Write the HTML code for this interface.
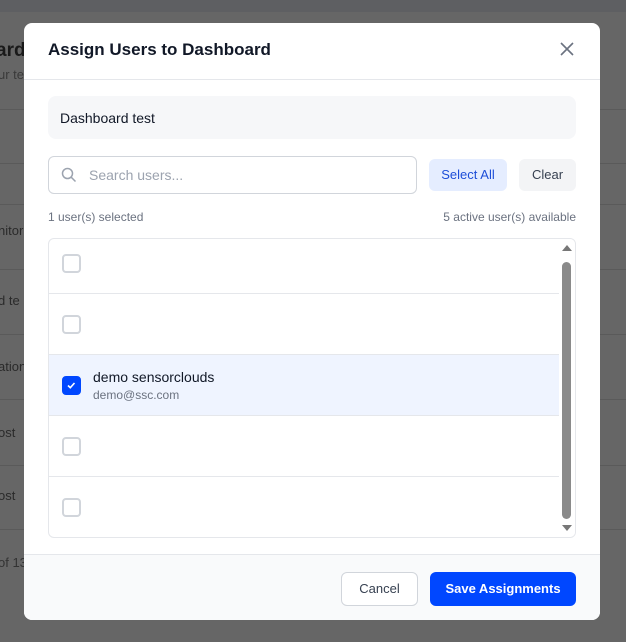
<!DOCTYPE html>
<html><head><style>
*{box-sizing:border-box;margin:0;padding:0}
body{width:626px;height:642px;overflow:hidden;font-family:"Liberation Sans",sans-serif;background:#666;position:relative}
.bgtop{position:absolute;left:0;top:0;width:626px;height:12px;background:#5e5f62}
.ln{position:absolute;left:0;width:626px;height:1px;background:#5a5a5a}
.bt{position:absolute;color:#2a2a2a;font-size:13px}
.modal{position:absolute;left:24px;top:23px;width:576px;height:597px;background:#fff;border-radius:8px;overflow:hidden}
.hd{height:57px;border-bottom:1px solid #e5e7eb;position:relative}
.hd h1{position:absolute;left:24px;top:17px;font-size:17px;font-weight:bold;color:#111827}
.x{position:absolute;right:26px;top:19px}
.name{position:absolute;left:24px;top:73px;width:528px;height:43px;background:#f6f7f9;border-radius:8px;font-size:14px;color:#111827;padding:14px 12px}
.search{position:absolute;left:24px;top:133px;width:369px;height:38px;border:1px solid #d1d5db;border-radius:6px}
.search span{position:absolute;left:40px;top:10px;color:#9ca3af;font-size:14px}
.search svg{position:absolute;left:12px;top:10px}
.sa{position:absolute;left:405px;top:136px;width:78px;height:32px;background:#e5edff;border-radius:6px;color:#1d4ed8;font-size:13px;text-align:center;line-height:32px}
.cl{position:absolute;left:495px;top:136px;width:57px;height:32px;background:#f3f4f6;border-radius:6px;color:#374151;font-size:13px;text-align:center;line-height:32px}
.meta{position:absolute;top:187px;font-size:12px;color:#6b7280}
.list{position:absolute;left:24px;top:215px;width:528px;height:300px;border:1px solid #e5e7eb;border-radius:6px;overflow:hidden}
.row{position:absolute;left:0;width:511px;border-bottom:1px solid #e5e7eb}
.cb{position:absolute;left:13px;width:19px;height:19px;border:2px solid #d1d5db;border-radius:4px;background:#fff}
.sb{position:absolute;right:0;top:0;width:16px;height:298px;background:#fff}
.thumb{position:absolute;left:3px;top:23px;width:9px;height:257px;background:#8a8a8a;border-radius:5px}
.ft{position:absolute;left:0;top:531px;width:576px;height:66px;background:#f9fafb;border-top:1px solid #e5e7eb}
.cancel{position:absolute;left:317px;top:17px;width:77px;height:34px;border:1px solid #d1d5db;border-radius:6px;background:#fff;text-align:center;line-height:32px;font-size:13px;color:#374151}
.save{position:absolute;left:406px;top:17px;width:146px;height:34px;border-radius:6px;background:#0047ff;color:#fff;text-align:center;line-height:34px;font-size:13px;font-weight:bold}
</style></head><body>
<div class="bgtop"></div>
<div class="ln" style="top:109px"></div><div class="ln" style="top:163px"></div><div class="ln" style="top:204px"></div><div class="ln" style="top:269px"></div><div class="ln" style="top:334px"></div><div class="ln" style="top:399px"></div><div class="ln" style="top:465px"></div><div class="ln" style="top:529px"></div>
<div class="bt" style="left:-4px;top:40px;font-size:19px;font-weight:bold;color:#1a1a1a">ard</div>
<div class="bt" style="left:-2px;top:67px;color:#3a3a3a">ur te</div>
<div class="bt" style="left:-2px;top:223px">nitor</div>
<div class="bt" style="left:-2px;top:293px">d te</div>
<div class="bt" style="left:-2px;top:359px">ation</div>
<div class="bt" style="left:-2px;top:425px">ost</div>
<div class="bt" style="left:-2px;top:488px">ost</div>
<div class="bt" style="left:-2px;top:555px;color:#333">of 13</div>
<div class="modal">
 <div class="hd"><h1>Assign Users to Dashboard</h1>
 <svg class="x" width="14" height="14" viewBox="0 0 14 14"><path d="M1 1L13 13M13 1L1 13" stroke="#6b7280" stroke-width="1.6"/></svg></div>
 <div class="name">Dashboard test</div>
 <div class="search"><svg width="16" height="16" viewBox="0 0 16 16"><circle cx="6.5" cy="6.5" r="5" stroke="#9ca3af" stroke-width="1.5" fill="none"/><path d="M10.3 10.3L14.5 14.5" stroke="#9ca3af" stroke-width="1.5"/></svg><span>Search users...</span></div>
 <div class="sa">Select All</div><div class="cl">Clear</div>
 <div class="meta" style="left:24px">1 user(s) selected</div>
 <div class="meta" style="right:24px">5 active user(s) available</div>
 <div class="list">
  <div class="row" style="top:0;height:55px"><div class="cb" style="top:15px"></div></div>
  <div class="row" style="top:55px;height:61px"><div class="cb" style="top:21px"></div></div>
  <div class="row" style="top:116px;height:61px;background:#eff4ff"><div class="cb" style="top:21px;background:#0047ff;border-color:#0047ff"><svg width="15" height="15" viewBox="0 0 15 15" style="position:absolute;left:0;top:0"><path d="M4 7.5L6.3 9.7L10.5 5" stroke="#fff" stroke-width="1.6" fill="none"/></svg></div>
   <div style="position:absolute;left:44px;top:14px;font-size:14px;color:#111827">demo sensorclouds</div>
   <div style="position:absolute;left:44px;top:33px;font-size:12px;color:#6b7280">demo@ssc.com</div></div>
  <div class="row" style="top:177px;height:61px"><div class="cb" style="top:21px"></div></div>
  <div class="row" style="top:238px;height:61px;border-bottom:none"><div class="cb" style="top:21px"></div></div>
  <div class="sb"><svg style="position:absolute;left:3px;top:6px" width="10" height="6"><path d="M0 6L5 0L10 6Z" fill="#777"/></svg><div class="thumb"></div><svg style="position:absolute;left:3px;top:286px" width="10" height="6"><path d="M0 0L5 6L10 0Z" fill="#777"/></svg></div>
 </div>
 <div class="ft"><div class="cancel">Cancel</div><div class="save">Save Assignments</div></div>
</div>
</body></html>
